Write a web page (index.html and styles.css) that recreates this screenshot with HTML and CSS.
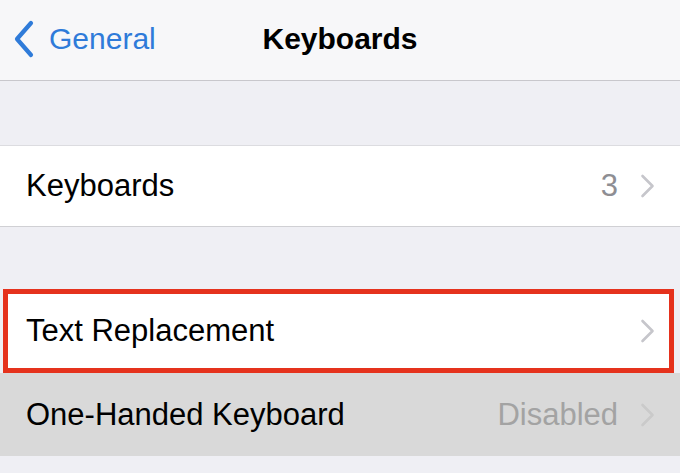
FILE: index.html
```html
<!DOCTYPE html>
<html>
<head>
<meta charset="utf-8">
<link rel="stylesheet" href="styles.css">
</head>
<body>
<header class="nav">
  <a class="back">
    <svg class="back-chev" width="22" height="38" viewBox="0 0 22 38"><path d="M18 3 L4 19 L18 35" fill="none" stroke="#2f7bd9" stroke-width="4.2" stroke-linecap="round" stroke-linejoin="round"/></svg>
    <span>General</span>
  </a>
  <h1 class="title">Keyboards</h1>
  <div></div>
</header>
<div class="gap gap-top"></div>
<section class="group">
  <div class="row">
    <span class="label">Keyboards</span>
    <span class="detail">3</span>
    <svg class="chev" width="15" height="24" viewBox="0 0 15 24"><path d="M2.5 2 L12.5 12 L2.5 22" fill="none" stroke="#c6c6cb" stroke-width="2.6" stroke-linecap="round" stroke-linejoin="round"/></svg>
  </div>
</section>
<div class="gap gap-mid"></div>
<section class="highlight">
  <div class="row row-hl">
    <span class="label">Text Replacement</span>
    <svg class="chev" width="15" height="24" viewBox="0 0 15 24"><path d="M2.5 2 L12.5 12 L2.5 22" fill="none" stroke="#c6c6cb" stroke-width="2.6" stroke-linecap="round" stroke-linejoin="round"/></svg>
  </div>
</section>
<section class="row row-pressed">
  <span class="label">One-Handed Keyboard</span>
  <span class="detail detail-dim">Disabled</span>
  <svg class="chev" width="15" height="24" viewBox="0 0 15 24"><path d="M2.5 2 L12.5 12 L2.5 22" fill="none" stroke="#cacaca" stroke-width="2.6" stroke-linecap="round" stroke-linejoin="round"/></svg>
</section>
</body>
</html>
```
FILE: styles.css
```css
* { box-sizing: border-box; }
html, body {
  margin: 0;
  padding: 0;
  background: #efeff4;
  font-family: "Liberation Sans", Arial, sans-serif;
  font-size: 30px;
  color: #000;
  height: 473px;
  overflow: hidden;
}
.nav {
  height: 81px;
  background: #f7f7f9;
  border-bottom: 1px solid #c8c7cc;
  display: grid;
  grid-template-columns: 1fr auto 1fr;
  align-items: center;
  padding: 0 0 2px 0;
}
.back {
  display: flex;
  align-items: center;
  color: #2f7bd9;
  padding-left: 13px;
  gap: 14px;
}
.back-chev { display: block; }
.title {
  margin: 0;
  font-size: 30px;
  font-weight: bold;
  letter-spacing: 0;
}
.gap-top { height: 64px; }
.gap-mid { height: 62px; }
.group {
  background: #fff;
  border-top: 1px solid #dcdce0;
  border-bottom: 1px solid #d0d0d4;
}
.row {
  height: 80px;
  display: flex;
  align-items: center;
  padding: 0 25px 0 26px;
  background: #fff;
  font-size: 31px;
}
.label { flex: 1; }
.detail {
  color: #8e8e93;
  margin-right: 22px;
}
.chev { display: block; }
.highlight {
  margin: 0 6px 0 3px;
  border: 5px solid #e5321d;
  background: #fff;
}
.row-hl {
  height: 74px;
  padding: 0 14px 0 18px;
}
.row-pressed {
  height: 83px;
  background: #d9d9d9;
}
.detail-dim { color: #a3a3a3; }
```
